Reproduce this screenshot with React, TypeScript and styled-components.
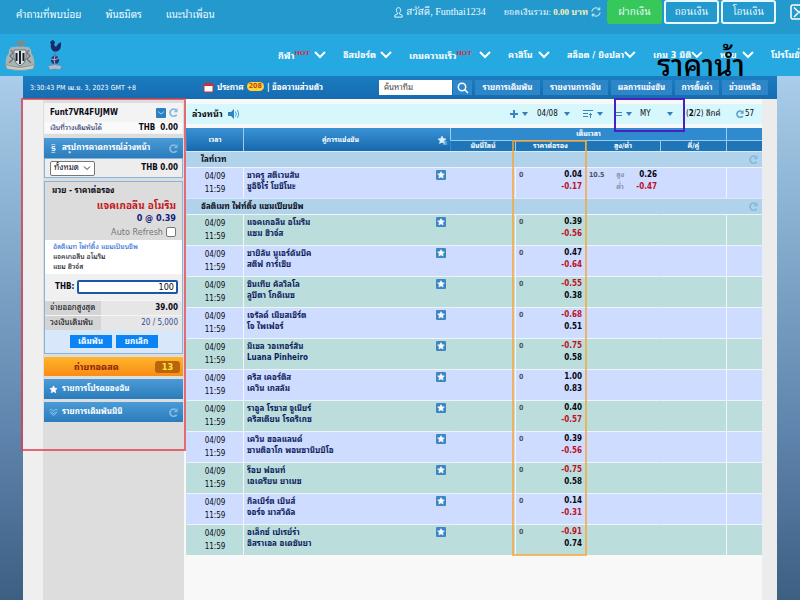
import React from "react";
import styled, { createGlobalStyle, css } from "styled-components";

const sans = `"DejaVu Sans Condensed", "DejaVu Sans", "Noto Sans Thai Looped", Loma, Waree, "Noto Sans Thai", "Noto Sans", sans-serif`;
const serif = `"Liberation Serif", "Noto Serif Thai", "Noto Sans Thai Looped", Loma, serif`;

const GlobalStyle = createGlobalStyle`
  *, *::before, *::after { box-sizing: border-box; }
  body { margin: 0; font-family: ${sans}; font-size: 8px; line-height: 12px; color: #0a0a14; }
  button, input, select { font: inherit; color: inherit; margin: 0; padding: 0; border: 0; background: none; }
  a { color: inherit; text-decoration: none; }
`;

/* ---------- page ---------- */

const Page = styled.div`
  position: relative;
  min-height: 100vh;
  display: flex;
  flex-direction: column;
  overflow: hidden;
  background: #2399cd;
`;

const TopBar = styled.header`
  display: flex;
  height: 34px;
  padding-left: 16px;
  align-items: flex-start;
  color: #f2fbff;
  background: #2399cd;
  white-space: nowrap;
  font-size: 10px;
`;

const TopLinks = styled.nav`
  display: flex;
  gap: 24px;
  line-height: 30px;
`;

const Account = styled.div`
  display: flex;
  flex: none;
  align-items: center;
  height: 24px;
  margin-left: auto;
  font-family: ${serif};
`;

const Greeting = styled.span`
  margin: 0 18px 0 3px;
`;

const Balance = styled.span`
  margin-right: 3px;
  font-size: 9px;
  b { color: #fff3b8; }
`;

const CashButton = styled.button<{ $solid?: boolean }>`
  width: 55px;
  height: 24px;
  margin-left: ${(p) => (p.$solid ? "6px" : "2px")};
  border: 2px solid ${(p) => (p.$solid ? "#36c85a" : "#e8f8ff")};
  border-radius: 3px;
  background: ${(p) => (p.$solid ? "#36c85a" : "#2399cd")};
  color: #f2fbff;
`;

const EdgeSlot = styled.span`
  width: 10px;
  margin-left: 14px;
  height: 16px;
`;

const NavBar = styled.div`
  display: flex;
  height: 42px;
  align-items: center;
  justify-content: space-between;
  padding-left: 4px;
  background: #25a9e0;
`;

const Crests = styled.div`
  display: flex;
  gap: 11px;
  align-items: center;
`;

const NavMenu = styled.nav`
  display: grid;
  grid-template-columns: 65px 66px 99px 59px 86px 67px 51px 29px;
  color: #fff;
  font-size: 9px;
  font-weight: 700;
  white-space: nowrap;
`;

const NavItem = styled.a`
  display: flex;
  align-items: center;
  justify-content: space-between;
  padding-right: 17px;
`;

const Hot = styled.sup`
  font-family: "Liberation Serif", serif;
  font-size: 7px;
  line-height: 8px;
  color: #e0243c;
`;

const Stage = styled.div`
  display: flex;
  flex: 1;
  padding: 0 23px;
  background: linear-gradient(#a9cdea 0%, #85adcd 30%, #5f84ad 68%, #3c5f82 100%);
`;

const Frame = styled.div`
  flex: 1;
  min-width: 0;
  display: flex;
  flex-direction: column;
`;

/* ---------- info bar ---------- */

const InfoBar = styled.div`
  display: flex;
  align-items: center;
  height: 23px;
  padding: 0 9px 0 7px;
  color: #fff;
  white-space: nowrap;
  background: linear-gradient(#1a7cc0, #176cb0);
`;

const Clock = styled.time`
  flex: 1;
  font-size: 7px;
`;

const Notices = styled.div`
  display: flex;
  align-items: center;
  gap: 3px;
  width: 176px;
  font-weight: 700;
`;

const Count = styled.span`
  padding: 0 2px;
  border-radius: 5px;
  background: #ffd52e;
  color: #c4471c;
  font-size: 7px;
  line-height: 9px;
  align-self: flex-start;
`;

const SearchForm = styled.form`
  display: flex;
  gap: 1px;
  margin-right: 3px;
  input {
    width: 73px;
    height: 15px;
    padding: 0 5px;
    background: #fff;
    color: #444;
    &::placeholder { color: #444; opacity: 1; }
  }
  button {
    display: grid;
    place-items: center;
    width: 19px;
    height: 15px;
    background: #2c86c8;
  }
`;

const InfoTabs = styled.nav`
  display: grid;
  grid-template-columns: 65px 65px 61px 44px 46px;
  gap: 3px;
  a {
    height: 15px;
    line-height: 15px;
    text-align: center;
    background: #2c86c8;
    font-weight: 700;
  }
`;

/* ---------- columns ---------- */

const Columns = styled.div`
  position: relative;
  display: flex;
  flex: 1;
`;

const SideRail = styled.aside`
  width: 161px;
  padding-left: 20px;
  background: #efefef;
  flex: none;
`;

const SideStack = styled.div`
  min-height: 100%;
  padding: 4px 1px 0;
  background: #dddddd;
`;

const AccountCard = styled.section`
  margin-bottom: 4px;
  background: #f3f3f3;
  border: 1px solid #f0f4f8;
`;

const SplitLine = styled.div<{ $h: number; $tone?: string }>`
  display: flex;
  align-items: center;
  justify-content: space-between;
  height: ${(p) => p.$h}px;
  padding: 0 4px 0 5px;
  background: ${(p) => p.$tone ?? "transparent"};
  white-space: nowrap;
`;

const IconPair = styled.span`
  display: flex;
  gap: 3px;
`;

const Navy = styled.span`
  color: #1a2a6c;
  font-size: 7px;
`;

const Panel = styled.section`
  border: 1px solid #86b4da;
  margin-bottom: 3px;
  background: #ededed;
`;

const SideHead = styled.h2<{ $gap?: boolean }>`
  display: flex;
  align-items: center;
  gap: 4px;
  height: 20px;
  margin: 0 0 ${(p) => (p.$gap ? "3px" : "0")};
  padding: 0 5px;
  color: #fff;
  font-size: 8px;
  white-space: nowrap;
  background: linear-gradient(#4a9bd6, #2a7cbc);
  svg:last-child:not(:first-child) { margin-left: auto; }
`;

const PeriodField = styled.span`
  display: flex;
  align-items: center;
  width: 45px;
  height: 15px;
  padding: 0 3px;
  border: 1px solid #777;
  border-radius: 2px;
  background: #fff;
  select { appearance: none; flex: 1; min-width: 0; }
`;

const Ticket = styled(Panel)`
  background: #d8e8fa;
`;

const Pick = styled.div`
  height: 58px;
  padding: 3px 6px 0 7px;
  background: #dcdcdc;
  text-align: right;
  white-space: nowrap;
`;

const PickTitle = styled.h3`
  height: 15px;
  margin: 0;
  font-size: 8px;
  line-height: 12px;
  text-align: left;
`;

const PickName = styled.div`
  color: #c4161c;
  font-size: 10px;
  font-weight: 700;
`;

const PickPrice = styled.div`
  color: #14207c;
  font-size: 9px;
  font-weight: 700;
`;

const RefreshLabel = styled.label`
  display: flex;
  justify-content: flex-end;
  align-items: center;
  gap: 3px;
  height: 16px;
  color: #777;
  font-size: 9px;
  input {
    appearance: none;
    width: 10px;
    height: 10px;
    border: 1px solid #777;
    border-radius: 2px;
    background: #fff;
  }
`;

const Bout = styled.div`
  height: 34px;
  padding: 2px 8px 0;
  background: #fff;
  font-size: 7px;
  line-height: 10px;
  white-space: nowrap;
  a { color: #2366d1; }
`;

const Stake = styled.label`
  display: flex;
  align-items: center;
  justify-content: space-between;
  height: 26px;
  padding: 0 4px 0 10px;
  background: #f0f0f0;
  font-weight: 700;
  input {
    width: 101px;
    height: 14px;
    padding-right: 2px;
    border: 2px solid #1c56a8;
    border-radius: 2px;
    background: #fff;
    text-align: right;
    font-size: 9px;
    font-weight: 400;
  }
`;

const LimitLine = styled.div`
  display: grid;
  grid-template-columns: 56px 1fr;
  height: 15px;
  border-top: 1px solid #f5f5f5;
  line-height: 14px;
  background: #e6e6e6;
  white-space: nowrap;
  span { padding-left: 5px; background: #d4d4d4; }
  b { padding-right: 4px; text-align: right; }
`;

const Limit = styled.b`
  font-weight: 400;
  color: #2a4fa0;
`;

const TicketActions = styled.div`
  display: flex;
  justify-content: center;
  gap: 4px;
  padding: 5px 0;
  button {
    width: 42px;
    height: 13px;
    background: #0a84f4;
    color: #fff;
    font-weight: 700;
  }
`;

const LiveBar = styled.button`
  display: flex;
  align-items: center;
  justify-content: space-between;
  width: 100%;
  height: 19px;
  margin-bottom: 3px;
  padding: 0 3px 0 30px;
  background: linear-gradient(#ffb52c, #f98c14);
  color: #8c1f0c;
  font-size: 9px;
  font-weight: 700;
`;

const LiveCount = styled.span`
  width: 25px;
  border-radius: 3px;
  background: #b9650c;
  color: #ffe53a;
`;

/* ---------- main board ---------- */

const Main = styled.main`
  flex: 1;
  min-width: 0;
  padding: 5px 0 0 2px;
  border-right: 15px solid #ececec;
  background: #f8f8f8;
`;

const ToolBar = styled.div`
  display: flex;
  align-items: center;
  height: 20px;
  margin-bottom: 4px;
  padding-left: 6px;
  background: #d6f8fc;
  white-space: nowrap;
  h1 { margin: 0 5px 0 0; font-size: 9px; }
`;

const Tools = styled.div`
  display: grid;
  grid-template-columns: 27px 46px 31px 26px 46px 50px 26px;
  align-items: center;
  margin-left: auto;
`;

const Tool = styled.button`
  display: flex;
  align-items: center;
  gap: 4px;
`;

const TimerTool = styled(Tool)`
  gap: 1px;
`;

const WideTool = styled(Tool)`
  justify-content: space-between;
  padding-right: 13px;
`;

const Board = styled.div`
  position: relative;
`;

const OddsTable = styled.table`
  width: 100%;
  table-layout: fixed;
  border-collapse: separate;
  border-spacing: 0;
`;

const Col = styled.col<{ $w?: number }>`
  ${(p) => p.$w && css`width: ${p.$w}px;`}
`;

const Th = styled.th<{ $low?: boolean }>`
  height: ${(p) => (p.$low ? "11px" : "12px")};
  padding: 0;
  line-height: 10px;
  font-size: 7px;
  color: #fff;
  border-left: 1px solid #9fcbea;
  border-top: ${(p) => (p.$low ? "1px solid #9fcbea" : "0")};
  background: ${(p) => (p.$low ? "#1e76b9" : "#2f8bcd")};
  &[rowspan] { background: linear-gradient(#3a93d4, #1668ad); }
  &:first-child { border-left-color: #2f8bcd; }
`;

const HeadFlex = styled.div`
  display: flex;
  align-items: center;
  padding-right: 3px;
  span { flex: 1; }
`;

const LeagueCell = styled.td`
  height: 16px;
  padding: 0 4px 0 15px;
  border-top: 1px solid #dbe9f3;
  background: #b0d2ea;
  font-weight: 700;
  div { display: flex; justify-content: space-between; align-items: center; }
`;

const Row = styled.tr<{ $alt: boolean }>`
  background: ${(p) => (p.$alt ? "#cddcff" : "#bbdedd")};
`;

const Cell = styled.td<{ $rule?: boolean; $center?: boolean }>`
  height: 31px;
  padding: 1px 3px 0;
  border-top: 1px solid #eef4fa;
  border-left: 1px solid ${(p) => (p.$rule ? "#f2f6fb" : "transparent")};
  vertical-align: top;
  text-align: ${(p) => (p.$center ? "center" : "left")};
`;

const Dates = styled.div`
  padding-top: 1px;
  line-height: 13px;
`;

const Match = styled.div`
  display: flex;
  justify-content: space-between;
  padding: 1px 1px 0 0;
  line-height: 11px;
  font-weight: 700;
  color: #0d1b5c;
  white-space: nowrap;
  button { height: 10px; line-height: 0; }
`;

const Odds = styled.div`
  display: flex;
  justify-content: space-between;
  line-height: 12px;
  font-weight: 700;
`;

const Line = styled.span`
  color: #4c5260;
  font-size: 7px;
`;

const Side = styled.span`
  color: #8c93a5;
  font-size: 7px;
`;

const Prices = styled.span`
  display: grid;
  text-align: right;
`;

const Price = styled.span<{ $neg: boolean }>`
  color: ${(p) => (p.$neg ? "#bd1027" : "#05060f")};
`;

/* ---------- marker overlays ---------- */

const SideMarker = styled.div`
  position: absolute;
  left: -2px;
  top: -1px;
  width: 165px;
  height: 353px;
  border: 2px solid rgba(222, 60, 72, 0.75);
  pointer-events: none;
`;

const TypeMarker = styled.div`
  position: absolute;
  right: 92px;
  top: -1px;
  width: 71px;
  height: 34px;
  border: 2px solid #4a1fc4;
  pointer-events: none;
`;

const ColumnMarker = styled.div`
  position: absolute;
  right: 175px;
  top: 12px;
  bottom: -1px;
  width: 75px;
  border: 2px solid rgba(248, 166, 50, 0.75);
  pointer-events: none;
`;

const Caption = styled.strong`
  position: absolute;
  right: 55px;
  top: 46px;
  font-size: 29px;
  line-height: 40px;
  font-weight: 500;
  color: #000;
`;

/* ---------- icons ---------- */

const Chevron = () => (
  <svg width="12" height="8" viewBox="0 0 12 8" fill="none" stroke="#fff" strokeWidth="2">
    <path d="M1 1l5 5 5-5" />
  </svg>
);

const ThinChevron = () => (
  <svg width="8" height="5" viewBox="0 0 8 5" fill="none" stroke="#333" strokeWidth="1">
    <path d="M1 .5l3 3 3-3" />
  </svg>
);

const Caret = () => (
  <svg width="6" height="4" viewBox="0 0 6 4">
    <path d="M0 0h6L3 4z" fill="#2f7fb8" />
  </svg>
);

const Reload = ({ color = "#84b9e2", size = 9 }: { color?: string; size?: number }) => (
  <svg width={size} height={size} viewBox="0 0 10 10" fill="none" stroke={color} strokeWidth="2">
    <path d="M8.500 7.500A4 4 0 1 1 7.600 2" />
    <path d="M9.500 0v4.600H5z" fill={color} stroke="none" />
  </svg>
);

const SyncIcon = () => (
  <svg width="10" height="10" viewBox="0 0 12 12" fill="none" stroke="#fff" strokeWidth="1">
    <path d="M1 5.5A5 5 0 0 1 10 3M11 6.5A5 5 0 0 1 2 9M10.5 0.5V3.3H7.7M1.5 11.5V8.7h2.8" />
  </svg>
);

const UserIcon = () => (
  <svg width="9" height="11" viewBox="0 0 9 11" fill="none" stroke="#e4f6ff" strokeWidth="1">
    <path d="M4.5.7c3 0 2.4 4.2.9 5.2v1l2.8 1.3v1.9H.8V8.2l2.8-1.3v-1C2.100 4.900 1.500.7 4.500.7z" />
  </svg>
);

const EdgeIcon = () => (
  <svg width="18" height="16" viewBox="0 0 18 16" fill="none" stroke="#fff" strokeWidth="1.500">
    <rect x="1" y="1" width="16" height="14" rx="2" />
    <path d="M4 3.500l5 5 5-5M4 13l4-4M14 13l-4-4" />
  </svg>
);

const StarPath = "M6 2l1.200 2.600 2.800.3-2.100 1.900.6 2.800L6 8.200 3.500 9.600l.6-2.800L2 4.900l2.800-.3z";

const StarBox = () => (
  <svg width="10" height="10" viewBox="0 0 12 12">
    <rect width="12" height="12" rx="1.500" fill="#3d86c4" />
    <path d={StarPath} fill="#fff" stroke="#fff" strokeWidth=".8" />
  </svg>
);

const Star = () => (
  <svg width="9" height="9" viewBox="1 1 10 10">
    <path d={StarPath} fill="#fff" stroke="#fff" strokeWidth=".8" />
  </svg>
);

const HeadStar = () => (
  <svg width="10" height="10" viewBox="1 1 10 10">
    <path d={StarPath} fill="#dff0fc" stroke="#dff0fc" strokeWidth=".6" />
    <path d="M7 8h4M7 10h4" stroke="#a9cdea" />
  </svg>
);

const MailIcon = () => (
  <svg width="10" height="10" viewBox="0 0 10 10">
    <rect width="10" height="10" rx="1" fill="#2c7fc0" />
    <path d="M2 3.500l3 2.500 3-2.500" fill="none" stroke="#a9d3f0" />
  </svg>
);

const CoinIcon = () => (
  <svg width="9" height="9" viewBox="0 0 10 10" fill="none" stroke="#fff" strokeWidth="1.200">
    <path d="M7 3H4.200a1 1 0 0 0 0 2h1.600a1 1 0 0 1 0 2H3" />
    <path d="M2.500.7h4.500M2.500 9.300h4.500" strokeWidth=".7" />
  </svg>
);

const SlipIcon = () => (
  <svg width="9" height="9" viewBox="0 0 10 9" fill="none" stroke="#8fd0e8" strokeWidth="1">
    <path d="M.5 2l2-1L5 3l2.500-2 2 1M1 4l4 4 4-4M2.500 3.500L5 6l2.500-2.500" />
  </svg>
);

const CalendarIcon = () => (
  <svg width="11" height="11" viewBox="0 0 11 11">
    <rect x=".5" y="1" width="10" height="9.500" rx="1.500" fill="#c9303a" />
    <rect x="1.500" y="4" width="8" height="5.500" fill="#fff" />
  </svg>
);

const SearchIcon = () => (
  <svg width="12" height="12" viewBox="0 0 12 12" fill="none" stroke="#fff" strokeWidth="1.500">
    <circle cx="5" cy="5" r="3.700" />
    <path d="M7.800 7.800L11 11" />
  </svg>
);

const SoundIcon = () => (
  <svg width="12" height="10" viewBox="0 0 12 10">
    <path d="M0 3h3l3-3v10L3 7H0z" fill="#2c83bd" />
    <path d="M7.500 2.500q1.500 2.500 0 5M9.500 1q2.500 4 0 8" fill="none" stroke="#4a9fd2" />
  </svg>
);

const PlusIcon = () => (
  <svg width="8" height="8" viewBox="0 0 8 8" stroke="#3a86b8" strokeWidth="2">
    <path d="M4 0v8M0 4h8" />
  </svg>
);

const SortIcon = () => (
  <svg width="10" height="8" viewBox="0 0 10 8" fill="none" stroke="#3a86b8" strokeWidth="1">
    <path d="M0 .5h10M0 3.500h5M0 6.500h5M7.500 8V3.500M6 5l1.500-1.500L9 5" />
  </svg>
);

const LinesIcon = () => (
  <svg width="8" height="6" viewBox="0 0 8 6" stroke="#3a86b8" strokeWidth="1">
    <path d="M0 1.500h8M0 4.500h8" />
  </svg>
);

const MagpieCrest = () => (
  <svg width="32" height="32" viewBox="0 0 32 32">
    <path d="M13 2l3 0 1-1 2 1 3-1-1 3-2 1-1 4h-4l1-4-3-1z" fill="#7f8a90" />
    <path d="M5 11q2-4 5-3 3-1 6 0 3-1 6 0 3-1 5 3 0 4 2 6 2 5 1 9-14 8-28 0-1-4 1-9 2-2 2-6z" fill="#aab3b2" />
    <path d="M7 11l2 3-3 3 3 3-4 4M25 11l-2 3 3 3-3 3 4 4" stroke="#66747b" strokeWidth="1.200" fill="none" />
    <path d="M10 11h12v8q-1 6-6 8-5-2-6-8z" fill="#dfe4e2" stroke="#6a757b" />
    <path d="M12.500 14v8M16 12v13M19.500 14v8" stroke="#17202a" strokeWidth="2" />
    <path d="M1 25q3 2 6 2 9 3 18 0 3 0 6-2l-2 5q-13 3-26 0z" fill="#c9cdc5" stroke="#79858a" strokeWidth=".6" />
  </svg>
);

const CockerelCrest = () => (
  <svg width="16" height="32" viewBox="0 0 16 32">
    <path d="M4 2l2-1 2 2-1 3 2 2 2-3 3-2v4q0 3-3 5l-3 1-2-1Q3 9 4 5L3 4z" fill="#1a2a68" />
    <path d="M8 12v5M6 16h4" stroke="#5a79ad" strokeWidth="1" />
    <circle cx="8" cy="21" r="4" fill="#25356f" />
    <path d="M4 20q4 2 8-1M8 17q-2 4 0 8" stroke="#9fb3d3" fill="none" />
    <path d="M1 27q7-3 14 0l-2 4q-5-2-10 0z" fill="#a9bdd0" stroke="#63809e" strokeWidth=".6" />
  </svg>
);

/* ---------- data ---------- */

interface Fight {
  a: string;
  b: string;
  odds: [string, string];
  total?: { line: string; odds: [string, string] };
}

const lightweight: Fight[] = [
  { a: "ชาครู สตีเวนสัน", b: "ชูอิจิโร่ โยชิโนะ", odds: ["0.04", "-0.17"], total: { line: "10.5", odds: ["0.26", "-0.47"] } },
];

const ultimate: Fight[] = [
  { a: "แจคเกอลีน อโมริม", b: "แซม ฮิวจ์ส", odds: ["0.39", "-0.56"] },
  { a: "ชายิลัน นูเอร์ดันบีค", b: "สตีฟ การ์เซีย", odds: ["0.47", "-0.64"] },
  { a: "ซินเทีย คัลวิลโล", b: "ลูปิตา โกดิเนซ", odds: ["-0.55", "0.38"] },
  { a: "เจรัลด์ เมียสเชิร์ต", b: "โจ ไพเฟอร์", odds: ["-0.68", "0.51"] },
  { a: "มิเชล วอเทอร์สัน", b: "Luana Pinheiro", odds: ["-0.75", "0.58"] },
  { a: "คริส เคอร์ติส", b: "เควิน เกสลัม", odds: ["1.00", "0.83"] },
  { a: "ราอูล โรซาส จูเนียร์", b: "คริสเตียน โรดริเกซ", odds: ["0.40", "-0.57"] },
  { a: "เควิน ฮอลแลนด์", b: "ซานติอาโก พอนซานิบบิโอ", odds: ["0.39", "-0.56"] },
  { a: "ร็อบ ฟอนท์", b: "เอเดรียน ยาเนซ", odds: ["-0.75", "0.58"] },
  { a: "กิลเบิร์ต เบินส์", b: "จอร์จ มาสวิดัล", odds: ["0.14", "-0.31"] },
  { a: "อเล็กซ์ เปเรย์ร่า", b: "อิสราเอล อเดซันยา", odds: ["-0.91", "0.74"] },
];

const menu: { label: string; hot?: boolean }[] = [
  { label: "กีฬา", hot: true },
  { label: "อีสปอร์ต" },
  { label: "เกมความเร็ว", hot: true },
  { label: "คาสิโน" },
  { label: "สล็อต / ยิงปลา" },
  { label: "เกม 3 มิติ" },
  { label: "หวย" },
];

const PricePair = ({ odds }: { odds: [string, string] }) => (
  <Prices>
    {odds.map((o) => (
      <Price key={o} $neg={o.startsWith("-")}>{o}</Price>
    ))}
  </Prices>
);

const FightRow = ({ fight, alt }: { fight: Fight; alt: boolean }) => (
  <Row $alt={alt}>
    <Cell $center><Dates>04/09<br />11:59</Dates></Cell>
    <Cell $rule>
      <Match>
        <span>{fight.a}<br />{fight.b}</span>
        <button type="button" aria-label={`${fight.a} – ${fight.b}`}><StarBox /></button>
      </Match>
    </Cell>
    <Cell />
    <Cell $rule>
      <Odds><Line>0</Line><PricePair odds={fight.odds} /></Odds>
    </Cell>
    <Cell>
      {fight.total && (
        <Odds>
          <Line>{fight.total.line}</Line>
          <Side>สูง<br />ต่ำ</Side>
          <PricePair odds={fight.total.odds} />
        </Odds>
      )}
    </Cell>
    <Cell />
    <Cell $rule />
  </Row>
);

const LeagueRow = ({ name }: { name: string }) => (
  <tr>
    <LeagueCell colSpan={7}><div>{name}<Reload /></div></LeagueCell>
  </tr>
);

export default function App() {
  return (
    <Page>
      <GlobalStyle />
      <TopBar>
        <TopLinks>
          <a href="#faq">คำถามที่พบบ่อย</a>
          <a href="#partners">พันธมิตร</a>
          <a href="#refer">แนะนำเพื่อน</a>
        </TopLinks>
        <Account>
          <UserIcon />
          <Greeting>สวัสดี, Funthai1234</Greeting>
          <Balance>ยอดเงินรวม: <b>0.00 บาท</b></Balance>
          <SyncIcon />
          <CashButton type="button" $solid>ฝากเงิน</CashButton>
          <CashButton type="button">ถอนเงิน</CashButton>
          <CashButton type="button">โอนเงิน</CashButton>
          <EdgeSlot><EdgeIcon /></EdgeSlot>
        </Account>
      </TopBar>
      <NavBar>
        <Crests><MagpieCrest /><CockerelCrest /></Crests>
        <NavMenu>
          {menu.map((m) => (
            <NavItem key={m.label} href="#menu">
              <span>{m.label}{m.hot && <Hot>HOT</Hot>}</span>
              <Chevron />
            </NavItem>
          ))}
          <NavItem href="#promo">โปรโมชั่น</NavItem>
        </NavMenu>
      </NavBar>
      <Stage>
        <Frame>
          <InfoBar>
            <Clock>3:30:43 PM เม.ย. 3, 2023 GMT +8</Clock>
            <Notices>
              <CalendarIcon />
              <a href="#notice">ประกาศ</a>
              <Count>208</Count>
              <span>| <a href="#messages">ข้อความส่วนตัว</a></span>
            </Notices>
            <SearchForm>
              <input type="text" aria-label="ค้นหาทีม" placeholder="ค้นหาทีม" />
              <button type="button" aria-label="ค้นหา"><SearchIcon /></button>
            </SearchForm>
            <InfoTabs>
              <a href="#bets">รายการเดิมพัน</a>
              <a href="#statement">รายงานการเงิน</a>
              <a href="#results">ผลการแข่งขัน</a>
              <a href="#settings">การตั้งค่า</a>
              <a href="#help">ช่วยเหลือ</a>
            </InfoTabs>
          </InfoBar>
          <Columns>
            <SideRail>
              <SideStack>
                <AccountCard>
                  <SplitLine $h={18}>
                    <b>Funt7VR4FUJMW</b>
                    <IconPair><MailIcon /><Reload /></IconPair>
                  </SplitLine>
                  <SplitLine $h={11} $tone="#fafafa"><Navy>เงินที่วางเดิมพันได้</Navy><b>THB&nbsp; 0.00</b></SplitLine>
                </AccountCard>
                <SideHead><CoinIcon />สรุปการคาดการณ์ล่วงหน้า<Reload /></SideHead>
                <Panel>
                  <SplitLine $h={18}>
                    <PeriodField>
                      <select aria-label="ช่วงเวลา"><option>ทั้งหมด</option></select>
                      <ThinChevron />
                    </PeriodField>
                    <b>THB 0.00</b>
                  </SplitLine>
                </Panel>
                <Ticket>
                  <Pick>
                    <PickTitle>มวย - ราคาต่อรอง</PickTitle>
                    <PickName>แจคเกอลีน อโมริม</PickName>
                    <PickPrice>0 @ 0.39</PickPrice>
                    <RefreshLabel>Auto Refresh<input type="checkbox" /></RefreshLabel>
                  </Pick>
                  <Bout>
                    <a href="#league">อัลติเมท ไฟท์ติ้ง แชมเปียนชิพ</a><br />
                    แจคเกอลีน อโมริม<br />
                    แซม ฮิวจ์ส
                  </Bout>
                  <Stake>THB:<input type="text" defaultValue="100" /></Stake>
                  <LimitLine><span>จ่ายออกสูงสุด</span><b>39.00</b></LimitLine>
                  <LimitLine><span>วงเงินเดิมพัน</span><Limit>20 / 5,000</Limit></LimitLine>
                  <TicketActions>
                    <button type="button">เดิมพัน</button>
                    <button type="button">ยกเลิก</button>
                  </TicketActions>
                </Ticket>
                <LiveBar type="button">ถ่ายทอดสด<LiveCount>13</LiveCount></LiveBar>
                <SideHead $gap><Star />รายการโปรดของฉัน</SideHead>
                <SideHead><SlipIcon />รายการเดิมพันมินิ<Reload /></SideHead>
              </SideStack>
            </SideRail>
            <Main>
              <ToolBar>
                <h1>ล่วงหน้า</h1>
                <SoundIcon />
                <Tools>
                  <Tool type="button" aria-label="เพิ่ม"><PlusIcon /><Caret /></Tool>
                  <WideTool type="button">04/08<Caret /></WideTool>
                  <Tool type="button" aria-label="เรียงลำดับ"><SortIcon /><Caret /></Tool>
                  <Tool type="button" aria-label="มุมมอง"><LinesIcon /><Caret /></Tool>
                  <WideTool type="button">MY<Caret /></WideTool>
                  <span>(<b>2</b>/2) ลีกค์</span>
                  <TimerTool type="button"><Reload color="#5a9fce" size={8} />57</TimerTool>
                </Tools>
              </ToolBar>
              <Board>
                <OddsTable>
                  <colgroup>
                    <Col $w={57} /><Col /><Col $w={65} /><Col $w={70} /><Col $w={75} /><Col $w={66} /><Col $w={36} />
                  </colgroup>
                  <thead>
                    <tr>
                      <Th rowSpan={2}>เวลา</Th>
                      <Th rowSpan={2}><HeadFlex><span>คู่การแข่งขัน</span><HeadStar /></HeadFlex></Th>
                      <Th colSpan={4}>เต็มเวลา</Th>
                      <Th />
                    </tr>
                    <tr>
                      <Th $low>มันนี่ไลน์</Th>
                      <Th $low>ราคาต่อรอง</Th>
                      <Th $low>สูง/ต่ำ</Th>
                      <Th $low>คี่/คู่</Th>
                      <Th $low />
                    </tr>
                  </thead>
                  <tbody>
                    <LeagueRow name="ไลท์เวท" />
                    {lightweight.map((f) => <FightRow key={f.a} fight={f} alt />)}
                    <LeagueRow name="อัลติเมท ไฟท์ติ้ง แชมเปียนชิพ" />
                    {ultimate.map((f, i) => <FightRow key={f.a} fight={f} alt={i % 2 === 1} />)}
                  </tbody>
                </OddsTable>
                <ColumnMarker />
              </Board>
            </Main>
            <SideMarker />
            <TypeMarker />
          </Columns>
        </Frame>
      </Stage>
      <Caption>ราคาน้ำ</Caption>
    </Page>
  );
}
